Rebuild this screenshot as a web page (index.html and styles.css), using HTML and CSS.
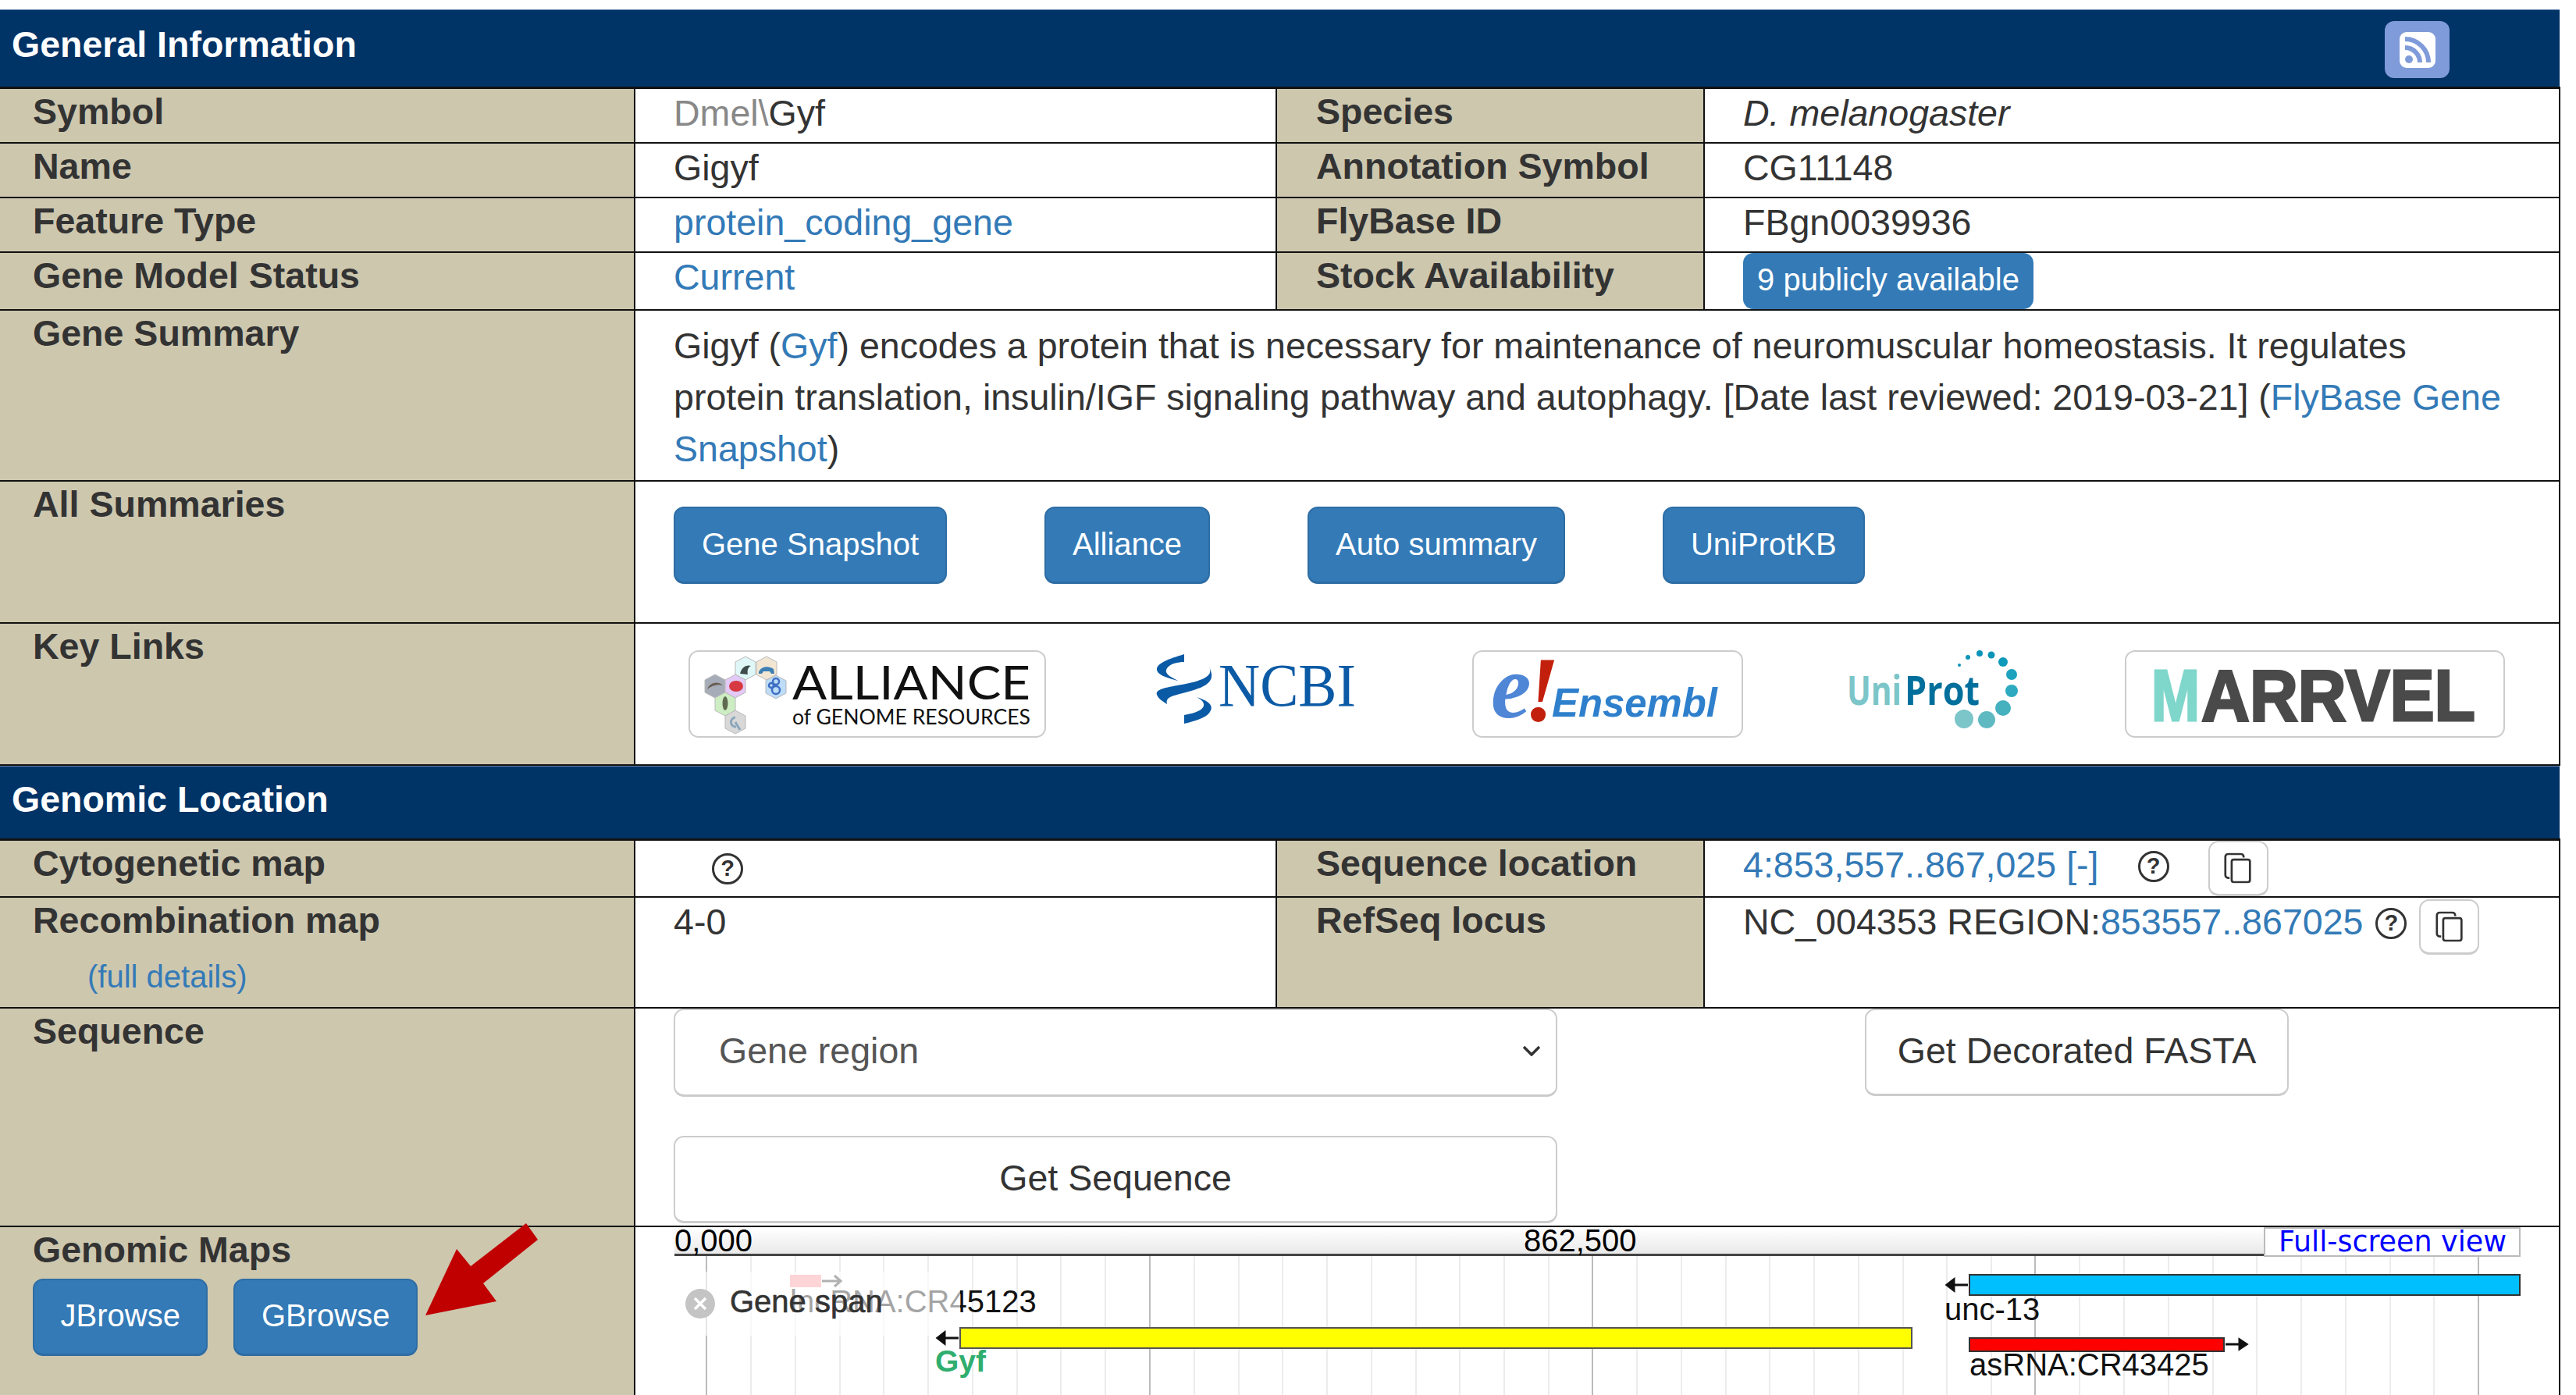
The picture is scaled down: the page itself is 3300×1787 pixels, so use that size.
FILE: index.html
```html
<!DOCTYPE html>
<html lang="en">
<head>
  <meta charset="UTF-8">
  <title>Gene report</title>
  <link rel="stylesheet" href="styles.css">
</head>
<body>
  <main class="report">
    <section class="band band--first">
      <h2 class="band__title">General Information</h2>
      <a class="rss" href="#">
        <svg viewBox="0 0 46 46" width="46" height="46">
          <rect width="46" height="46" rx="9" fill="#fff"/>
          <circle cx="12" cy="35" r="5" fill="#7f9bd9"/>
          <path d="M7 20a19 19 0 0 1 19 19M7 9a30 30 0 0 1 30 30" fill="none" stroke="#7f9bd9" stroke-width="6"/>
        </svg>
      </a>
    </section>
    <table class="info">
      <colgroup><col class="c1"><col class="c2"><col class="c3"><col class="c4"></colgroup>
      <tr class="r70">
        <th>Symbol</th><td><span class="muted">Dmel\</span>Gyf</td>
        <th>Species</th><td><i>D. melanogaster</i></td>
      </tr>
      <tr class="r70">
        <th>Name</th><td>Gigyf</td>
        <th>Annotation Symbol</th><td>CG11148</td>
      </tr>
      <tr class="r70">
        <th>Feature Type</th><td><a href="#">protein_coding_gene</a></td>
        <th>FlyBase ID</th><td>FBgn0039936</td>
      </tr>
      <tr class="r74">
        <th>Gene Model Status</th><td><a href="#">Current</a></td>
        <th>Stock Availability</th><td class="flush"><a class="badge" href="#">9 publicly available</a></td>
      </tr>
      <tr class="r219">
        <th>Gene Summary</th>
        <td colspan="3" class="summary">Gigyf (<a href="#">Gyf</a>) encodes a protein that is necessary for maintenance of neuromuscular homeostasis. It regulates protein translation, insulin/IGF signaling pathway and autophagy. [Date last reviewed: 2019-03-21] (<a href="#">FlyBase Gene Snapshot</a>)</td>
      </tr>
      <tr class="r182">
        <th>All Summaries</th>
        <td colspan="3" class="flush">
          <div class="btn-row">
            <a class="btn" href="#">Gene Snapshot</a>
            <a class="btn" href="#">Alliance</a>
            <a class="btn" href="#">Auto summary</a>
            <a class="btn" href="#">UniProtKB</a>
          </div>
        </td>
      </tr>
      <tr class="r182">
        <th>Key Links</th>
        <td colspan="3" class="flush">
          <div class="logos">
            <svg class="logo" width="458" height="113" viewBox="0 0 458 113">
              <rect x="1" y="1" width="456" height="110" rx="12" fill="#fff" stroke="#ccc" stroke-width="2"/>
              <g stroke="#b9b9b9" stroke-width="1">
                <polygon points="73,8 86,15 86,31 73,38 60,31 60,15" fill="#dff7f7"/>
                <polygon points="100,8 113,15 113,31 100,38 87,31 87,15" fill="#f2e6d3"/>
                <polygon points="34,31 47,38 47,54 34,61 21,54 21,38" fill="#a7adb8"/>
                <polygon points="60,31 73,38 73,54 60,61 47,54 47,38" fill="#e3c9f5"/>
                <polygon points="112,32 125,39 125,55 112,62 99,55 99,39" fill="#bcdcf7"/>
                <polygon points="47,54 60,61 60,77 47,84 34,77 34,61" fill="#cdeec2"/>
                <polygon points="60,77 73,84 73,100 60,107 47,100 47,84" fill="#d8d8d8"/>
              </g>
              <path d="M66 30c2-8 8-12 14-10-4 2-5 6-4 11z" fill="#3f4a4a"/>
              <path d="M90 28c2-7 12-9 19-4l1 6h-4l-2-3h-8l-2 3h-4z" fill="#3c7fb5"/>
              <path d="M24 50c3-9 14-11 20-5-6-2-14 0-20 5z" fill="#6b5f55"/>
              <ellipse cx="61" cy="46" rx="9" ry="7" fill="#d6393f"/>
              <g fill="none" stroke="#3f6fc4" stroke-width="2.5"><circle cx="112" cy="40" r="4"/><circle cx="112" cy="51" r="5"/><circle cx="106" cy="45" r="3"/></g>
              <ellipse cx="47" cy="68" rx="3.5" ry="9" fill="#5f6b50"/>
              <path d="M60 86a6 6 0 1 0 1 12M60 92l6 10" fill="none" stroke="#8ba7bd" stroke-width="3"/>
              <text class="t-alliance" x="133" y="63" font-size="60" textLength="305" lengthAdjust="spacingAndGlyphs">ALLIANCE</text>
              <text class="t-alliance" x="133" y="95" font-size="26" textLength="305" lengthAdjust="spacingAndGlyphs">of GENOME RESOURCES</text>
            </svg>
            <svg class="logo logo--ncbi" width="258" height="90" viewBox="0 0 258 90">
              <g fill="#0b5aa5">
                <path d="M38 0C18 6 2 12 3 20C4 27 18 31 30 34C18 28 12 24 16 18C20 12 30 10 38 10Z"/>
                <path d="M70 17C76 28 60 34 40 38C20 42 0 44 3 52C5 57 10 60 16 64C14 56 20 54 36 50C58 44 82 38 70 17Z"/>
                <path d="M54 55C70 60 75 66 72 72C68 82 50 86 38 89L38 78C50 76 62 72 63 66C64 62 60 58 54 55Z"/>
              </g>
              <text class="t-ncbi" x="82" y="66" font-size="78" textLength="176" lengthAdjust="spacingAndGlyphs">NCBI</text>
            </svg>
            <svg class="logo logo--ensembl" width="347" height="113" viewBox="0 0 347 113">
              <rect x="1" y="1" width="345" height="110" rx="12" fill="#fff" stroke="#ccc" stroke-width="2"/>
              <text class="t-e" x="24" y="86" font-size="116">e</text>
              <text class="t-bang" x="66" y="90" font-size="118">!</text>
              <text class="t-ensembl" x="102" y="85" font-size="52" textLength="212" lengthAdjust="spacingAndGlyphs">Ensembl</text>
            </svg>
            <svg class="logo logo--uniprot" width="221" height="101" viewBox="0 0 221 101">
              <text class="t-uni" x="0" y="70" font-size="52" textLength="70" lengthAdjust="spacingAndGlyphs">Uni</text>
              <text class="t-prot" x="74" y="70" font-size="52" textLength="96" lengthAdjust="spacingAndGlyphs">Prot</text>
              <circle cx="144" cy="19" r="2" fill="#0a95b8"/>
              <circle cx="155" cy="9" r="3" fill="#0a95b8"/>
              <circle cx="170" cy="4" r="4" fill="#0a95b8"/>
              <circle cx="185" cy="6" r="4.5" fill="#0a95b8"/>
              <circle cx="200" cy="15" r="6" fill="#0e9abb"/>
              <circle cx="211" cy="31" r="7" fill="#1ea2bd"/>
              <circle cx="211" cy="52" r="8" fill="#2daabf"/>
              <circle cx="200" cy="74" r="10" fill="#45b1bf"/>
              <circle cx="179" cy="89" r="11" fill="#5fb9c1"/>
              <circle cx="150" cy="88" r="12" fill="#7cc5c8"/>
            </svg>
            <svg class="logo logo--marrvel" width="487" height="113" viewBox="0 0 487 113">
              <rect x="1" y="1" width="485" height="110" rx="12" fill="#fff" stroke="#ccc" stroke-width="2"/>
              <text class="t-m" x="34" y="90" font-size="92" textLength="62" lengthAdjust="spacingAndGlyphs">M</text>
              <text class="t-rrvel" x="98" y="90" font-size="92" textLength="351" lengthAdjust="spacingAndGlyphs">ARRVEL</text>
            </svg>
          </div>
        </td>
      </tr>
    </table>
    <section class="band band--second">
      <h2 class="band__title">Genomic Location</h2>
    </section>
    <table class="info">
      <colgroup><col class="c1"><col class="c2"><col class="c3"><col class="c4"></colgroup>
      <tr class="r72">
        <th>Cytogenetic map</th>
        <td class="flush"><span class="help help--cyto">?</span></td>
        <th>Sequence location</th>
        <td class="flush">
          <div class="loc">
            <a class="loc__text" href="#">4:853,557..867,025 [-]</a>
            <span class="help help--spaced">?</span>
            <button class="copy copy--spaced">
              <svg viewBox="0 0 40 44" width="36" height="40"><use href="#copy-glyph"/></svg>
            </button>
          </div>
        </td>
      </tr>
      <tr class="r142">
        <th>Recombination map<a class="details" href="#">(full details)</a></th>
        <td>4-0</td>
        <th>RefSeq locus</th>
        <td class="flush">
          <div class="loc">
            <span class="loc__text">NC_004353 REGION:<a href="#">853557..867025</a></span>
            <span class="help">?</span>
            <button class="copy copy--lower">
              <svg viewBox="0 0 40 44" width="36" height="40"><use href="#copy-glyph"/></svg>
            </button>
          </div>
        </td>
      </tr>
      <tr class="r280">
        <th>Sequence</th>
        <td colspan="3" class="flush">
          <div class="seq">
            <div class="seq__main">
              <div class="select">
                <span>Gene region</span>
                <svg viewBox="0 0 24 14" width="24" height="14"><path d="M2 2l10 10L22 2" fill="none" stroke="#333" stroke-width="3.5"/></svg>
              </div>
              <button class="plain plain--wide">Get Sequence</button>
            </div>
            <button class="plain plain--fasta">Get Decorated FASTA</button>
          </div>
        </td>
      </tr>
      <tr class="r217">
        <th class="maps">
          Genomic Maps
          <div class="maps__btns">
            <a class="btn btn--map" href="#">JBrowse</a>
            <a class="btn btn--map" href="#">GBrowse</a>
          </div>
        </th>
        <td colspan="3" class="flush map-cell">
          <svg class="track" width="2414" height="215" viewBox="862 1575 2414 215">
            <defs>
              <linearGradient id="ruler" x1="0" y1="0" x2="0" y2="1">
                <stop offset="0" stop-color="#fff"/><stop offset="1" stop-color="#e9e9e9"/>
              </linearGradient>
            </defs>
            <g stroke="#ececec" stroke-width="2">
              <path d="M961 1612V1790M1018 1612V1790M1075 1612V1790M1131 1612V1790M1188 1612V1790M1245 1612V1790M1302 1612V1790M1358 1612V1790M1415 1612V1790"/>
              <path d="M1529 1612V1790M1586 1612V1790M1642 1612V1790M1699 1612V1790M1756 1612V1790M1813 1612V1790M1869 1612V1790M1926 1612V1790M1983 1612V1790"/>
              <path d="M2096 1612V1790M2153 1612V1790M2210 1612V1790M2266 1612V1790M2323 1612V1790M2380 1612V1790M2437 1612V1790M2493 1612V1790M2550 1612V1790"/>
              <path d="M2663 1612V1790M2720 1612V1790M2777 1612V1790M2834 1612V1790M2890 1612V1790M2947 1612V1790M3004 1612V1790M3061 1612V1790M3117 1612V1790"/>
            </g>
            <path d="M904 1612V1790M1472 1612V1790M2039 1612V1790M2606 1612V1790M3174 1612V1790" stroke="#bbb" stroke-width="2"/>
            <rect x="863" y="1576" width="2037" height="33" fill="url(#ruler)"/>
            <rect x="863" y="1609" width="2037" height="3" fill="#444"/>
            <text class="t-ruler" x="863" y="1606">0,000</text>
            <text class="t-ruler" x="1951" y="1606">862,500</text>
            <rect x="2900" y="1576" width="327" height="36" fill="#fff" stroke="#bbb" stroke-width="2"/>
            <text class="t-full" x="2918" y="1606" textLength="292" lengthAdjust="spacingAndGlyphs">Full-screen view</text>
            <rect x="1011" y="1636" width="40" height="16" fill="#ff8f95"/>
            <path d="M1052 1644h24M1068 1637l8 7-8 7" fill="none" stroke="#333" stroke-width="3"/>
            <text class="t-track" x="1011" y="1684">lncRNA:CR45123</text>
            <rect x="863" y="1632" width="366" height="82" fill="#fff" fill-opacity=".62"/>
            <circle cx="896" cy="1673" r="19" fill="#c4c4c4"/>
            <path d="M889 1666l14 14M903 1666l-14 14" stroke="#fff" stroke-width="3.5"/>
            <text class="t-span" x="934" y="1684">Gene span</text>
            <rect x="1229" y="1704" width="1219" height="26" fill="#ff0" stroke="#555" stroke-width="2"/>
            <path d="M1227 1717h-18M1209 1710l-9 7 9 7z" fill="#111" stroke="#111" stroke-width="3"/>
            <text class="t-gyf" x="1197" y="1760">Gyf</text>
            <rect x="2522" y="1636" width="705" height="26" fill="#00bfff" stroke="#333" stroke-width="2"/>
            <path d="M2520 1649h-18M2502 1642l-9 7 9 7z" fill="#111" stroke="#111" stroke-width="3"/>
            <text class="t-track" x="2490" y="1694">unc-13</text>
            <rect x="2522" y="1717" width="326" height="17" fill="#f00" stroke="#333" stroke-width="2"/>
            <path d="M2850 1725h18M2868 1719l9 6-9 6z" fill="#111" stroke="#111" stroke-width="3"/>
            <text class="t-track" x="2522" y="1765">asRNA:CR43425</text>
          </svg>
        </td>
      </tr>
    </table>
    <svg class="pointer" width="160" height="130" viewBox="540 1562 160 130">
      <polygon points="545,1685 585,1600 603,1622 674,1567 689,1588 619,1644 636,1667" fill="#c00000"/>
    </svg>
    <svg class="defs" width="0" height="0">
      <symbol id="copy-glyph" viewBox="0 0 40 44">
        <path d="M8 36H6a4 4 0 0 1-4-4V6a4 4 0 0 1 4-4h18a4 4 0 0 1 4 4v1" fill="none" stroke="#333" stroke-width="3"/>
        <rect x="11" y="10" width="26" height="32" rx="3" fill="none" stroke="#333" stroke-width="3"/>
      </symbol>
    </svg>
  </main>
</body>
</html>
```
FILE: styles.css
```css
*,
*::before,
*::after {
  box-sizing: border-box;
}
html, body{
  margin: 0;
  padding: 0;
  height: 1787px;
  overflow: hidden;
  background-color: #fff;
}
body{
  font-family: 'Liberation Sans', Arial, sans-serif;
  font-size: 46.55px;
  line-height: 58px;
  color: #333;
}
a{
  color: #337ab7;
  text-decoration: none;
}
.report{
  position: relative;
  width: 3279px;
  padding-top: 12px;
}

/* navy section bars */
.band{
  display: flex;
  justify-content: space-between;
  align-items: flex-start;
  background-color: #036;
  border-top: 1px solid #5d7fa8;
  padding-left: 15px;
}
.band--first{
  height: 99px;
  padding-right: 141px;
}
.band--second{
  height: 93px;
}
.band__title{
  margin: 0;
  padding-top: 12px;
  font-size: 46.5px;
  line-height: 64px;
  color: #fff;
}
.band--second .band__title{
  padding-top: 10px;
}
.rss{
  display: flex;
  align-items: center;
  justify-content: center;
  width: 83px;
  height: 73px;
  margin-top: 14px;
  background-color: #7f9bd9;
  border-radius: 12px;
}

/* tables */
.info{
  width: 3279px;
  table-layout: fixed;
  border-collapse: collapse;
}
.c1{ width: 813px; }
.c2{ width: 822px; }
.c3{ width: 548px; }
.c4{ width: 1096px; }
.info th,
.info td{
  padding: 0 0 0 49px;
  vertical-align: top;
  text-align: left;
  border: 2px solid #111;
}
.info td{
  padding-top: 2px;
}
.info td.flush{
  padding-top: 0;
}
.info tr:first-child th,
.info tr:first-child td{
  border-top: 3px solid #111;
}
.info th{
  padding-left: 50px;
  background-color: #cdc7ae;
  font-weight: bold;
}
.info th:first-child{
  padding-left: 42px;
  border-left: none;
}
.r70{ height: 70px; }
.r72{ height: 72px; }
.r74{ height: 74px; }
.r142{ height: 142px; }
.r182{ height: 182px; }
.r217{ height: 217px; }
.r219{ height: 219px; }
.r280{ height: 280px; }
.muted{
  color: #888;
}
.info td.summary{
  padding-top: 12px;
  padding-right: 60px;
  line-height: 66.4px;
}
.badge{
  display: inline-block;
  width: 372px;
  height: 72px;
  background-color: #337ab7;
  border-radius: 13px;
  color: #fff;
  font-size: 40px;
  line-height: 68px;
  text-align: center;
}

/* buttons */
.btn-row{
  display: flex;
  gap: 125px;
  margin-top: 32px;
}
.btn{
  display: block;
  padding: 0 34px;
  height: 99px;
  background-color: #337ab7;
  border: 2px solid #2e6da4;
  border-bottom-width: 3px;
  border-radius: 13px;
  color: #fff;
  font-weight: normal;
  font-size: 40px;
  line-height: 92px;
}
.maps__btns{
  display: flex;
  gap: 33px;
  margin-top: 8px;
}
.btn--map{
  padding: 0 33.5px;
  line-height: 90px;
}

/* logos */
.logos{
  display: flex;
  align-items: flex-start;
  margin: 34px 0 0 19px;
}
.logo{
  flex: none;
  overflow: visible;
}
.logo--ncbi{
  margin: 5px 0 0 139px;
}
.logo--ensembl{
  margin-left: 149px;
}
.logo--uniprot{
  margin-left: 133px;
}
.logo--marrvel{
  margin-left: 135px;
}
.t-alliance{
  font-family: Lato, sans-serif;
  fill: #111;
}
.t-ncbi{
  font-family: 'Liberation Serif', serif;
  fill: #0b5aa5;
}
.t-e{
  font-family: 'Liberation Serif', serif;
  font-style: italic;
  font-weight: bold;
  fill: #4f86d6;
}
.t-bang{
  font-family: 'Liberation Serif', serif;
  font-style: italic;
  font-weight: bold;
  fill: #c2200c;
}
.t-ensembl{
  font-family: 'Liberation Sans', sans-serif;
  font-style: italic;
  font-weight: bold;
  fill: #2f80cc;
}
.t-uni{
  font-family: 'Open Sans', sans-serif;
  font-weight: bold;
  fill: #7cc5c8;
}
.t-prot{
  font-family: 'Open Sans', sans-serif;
  font-weight: bold;
  fill: #006f9c;
}
.t-m{
  font-family: 'Liberation Sans', sans-serif;
  font-weight: bold;
  fill: #7fd6cb;
  stroke: #7fd6cb;
  stroke-width: 3px;
}
.t-rrvel{
  font-family: 'Liberation Sans', sans-serif;
  font-weight: bold;
  fill: #4a4a4a;
  stroke: #4a4a4a;
  stroke-width: 3px;
}

/* location rows */
.loc{
  display: flex;
  align-items: flex-start;
}
.loc__text{
  margin-top: 2px;
}
.help{
  display: inline-block;
  flex: none;
  width: 40px;
  height: 40px;
  margin: 13px 0 0 16px;
  border: 3px solid #333;
  border-radius: 50%;
  font-size: 29px;
  font-weight: bold;
  line-height: 33px;
  text-align: center;
}
.help--cyto{
  margin: 10px 0 0 0;
  position: relative;
  left: 49px;
}
.help--spaced{
  margin-left: 50px;
}
.copy{
  display: flex;
  align-items: center;
  justify-content: center;
  flex: none;
  width: 77px;
  height: 71px;
  margin-left: 16px;
  padding: 0;
  background-color: #fff;
  border: 2px solid #ccc;
  border-bottom-width: 3px;
  border-radius: 13px;
}
.copy--spaced{
  margin-left: 50px;
}
.copy--lower{
  margin-top: 2px;
}
.details{
  display: block;
  margin: 10px 0 0 70px;
  font-weight: normal;
  font-size: 40px;
  line-height: 66px;
}

/* sequence row */
.seq{
  display: flex;
  align-items: flex-start;
}
.seq__main{
  display: flex;
  flex-direction: column;
  gap: 50px;
  width: 1132px;
}
.select{
  display: flex;
  align-items: center;
  justify-content: space-between;
  height: 113px;
  padding: 0 19px 3px 56px;
  border: 2px solid #ccc;
  border-bottom-width: 3px;
  border-radius: 13px;
  color: #555;
}
.plain{
  height: 112px;
  padding: 0 0 3px;
  background-color: #fff;
  border: 2px solid #ccc;
  border-bottom-width: 3px;
  border-radius: 13px;
  font-family: inherit;
  font-size: 46.55px;
  color: #333;
}
.plain--fasta{
  width: 543px;
  margin-left: 394px;
}

/* genome map */
.map-cell{
  line-height: 0;
}
.track{
  display: block;
  overflow: visible;
}
.t-ruler{
  font-family: 'Liberation Sans', sans-serif;
  font-size: 40px;
  fill: #000;
}
.t-full{
  font-family: 'DejaVu Sans', sans-serif;
  font-size: 38px;
  fill: #00f;
}
.t-track{
  font-family: 'Liberation Sans', sans-serif;
  font-size: 40px;
  fill: #111;
}
.t-span{
  font-family: 'Liberation Sans', sans-serif;
  font-size: 40px;
  fill: #333;
  stroke: #333;
  stroke-width: .6px;
}
.t-gyf{
  font-family: 'Liberation Sans', sans-serif;
  font-size: 39px;
  font-weight: bold;
  fill: #2fae6f;
}

/* red annotation arrow over the maps cell */
.pointer{
  position: absolute;
  left: 540px;
  top: 1562px;
}
.defs{
  position: absolute;
}
```
